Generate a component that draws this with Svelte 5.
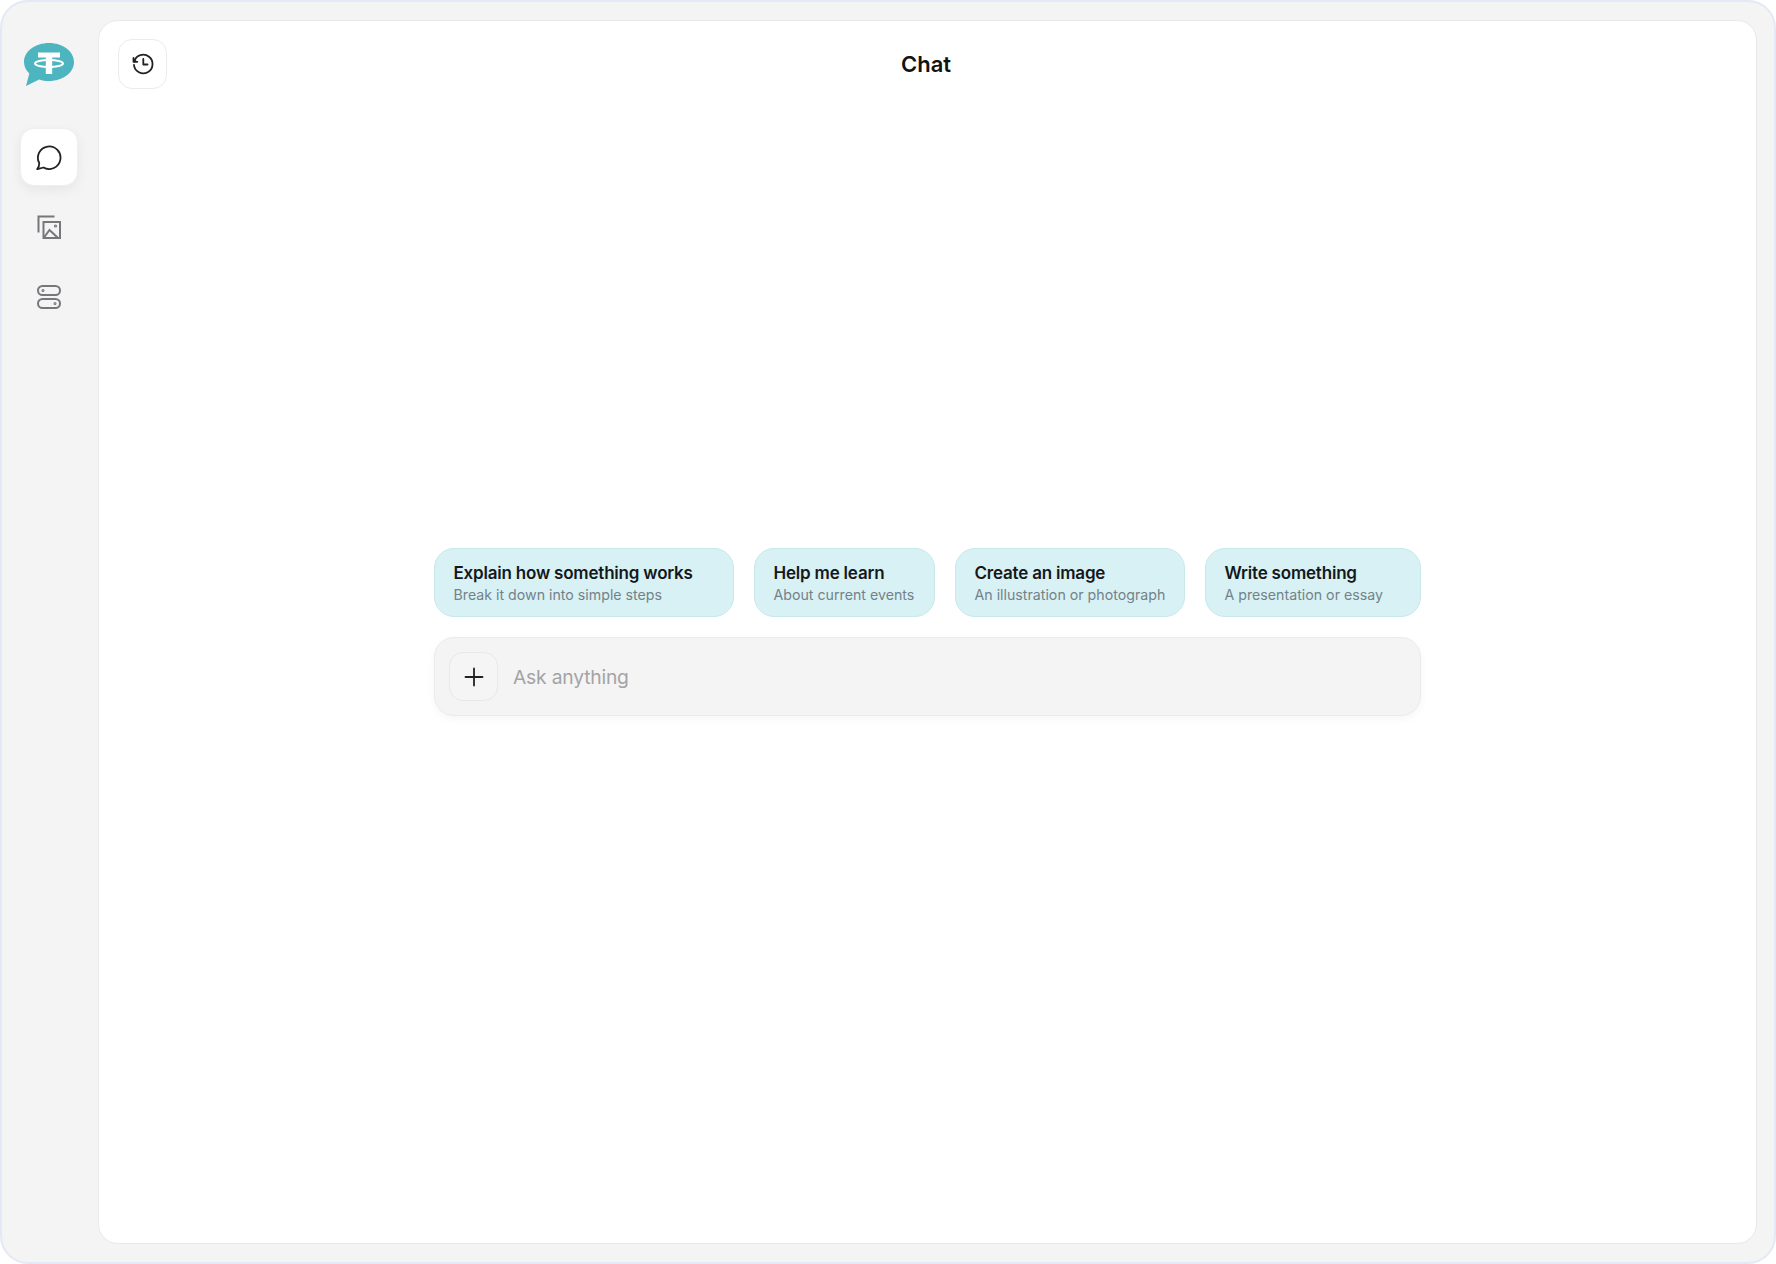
<script>
  const chips = [
    ['Explain how something works', 'Break it down into simple steps'],
    ['Help me learn', 'About current events'],
    ['Create an image', 'An illustration or photograph'],
    ['Write something', 'A presentation or essay']
  ];
</script>

<div class="shell">
  <aside class="rail">
    <div class="logo">
      <svg width="50" height="43" viewBox="0 0 50 43">
        <path d="M25 0C38.800 0 50 8.300 50 19C50 29.700 38.800 38 25 38C21.500 38 18.200 37.500 15.200 36.400L2 43L5.300 30.400C2 27.300 0 23.300 0 19C0 8.300 11.200 0 25 0Z" fill="#4DB5BF"/>
        <path d="M14 9.500H36V14.500H28.200V31H21.800V14.500H14Z" fill="#fff"/>
        <ellipse cx="25" cy="20.500" rx="14" ry="3.600" fill="none" stroke="#fff" stroke-width="2"/>
      </svg>
    </div>
    <button class="nav active" aria-label="Chat">
      <svg width="26" height="26" viewBox="1 -1 26 26" fill="none" stroke="#222" stroke-width="1.800" stroke-linejoin="round" stroke-linecap="round">
        <path d="M4.200 18A11.300 11.300 0 1 1 8.500 22.500L2.200 24.200Q4.500 21.500 4.200 18Z"/>
      </svg>
    </button>
    <button class="nav" aria-label="Images">
      <svg width="24" height="24" viewBox="0 0 24 24" fill="none" stroke="#77777B" stroke-width="2">
        <path d="M17.500 1.500H1.500V17.500"/>
        <rect x="6.500" y="7" width="16.500" height="16"/>
        <path d="M7 22.500L12.500 15L20.500 22.500"/>
        <circle cx="18.500" cy="11" r="0.600"/>
      </svg>
    </button>
    <button class="nav" aria-label="Tools">
      <svg width="24" height="24" viewBox="0 0 24 24" fill="none" stroke="#77777B" stroke-width="2">
        <rect x="1" y="1" width="22" height="9" rx="4.500"/>
        <rect x="1" y="14" width="22" height="9" rx="4.500"/>
        <circle cx="6" cy="5.500" r="0.500" fill="#77777B"/>
        <circle cx="18" cy="18.500" r="0.500" fill="#77777B"/>
      </svg>
    </button>
  </aside>

  <main class="panel">
    <header class="top">
      <button class="history" aria-label="History">
        <svg width="24" height="24" viewBox="0 0 24 24" fill="none" stroke="#222" stroke-width="1.800" stroke-linecap="round" stroke-linejoin="round">
          <path d="M3.300 9.500A9.300 9.300 0 1 1 3 13"/>
          <path d="M2.500 6V9.800H6.300" fill="#222"/>
          <path d="M12.300 7V12.500H16.500"/>
        </svg>
      </button>
      <h1>Chat</h1>
    </header>

    <section class="prompt">
      <div class="chips">
        {#each chips as [title, sub]}
          <button class="chip">
            <strong>{title}</strong>
            <span>{sub}</span>
          </button>
        {/each}
      </div>
      <div class="ask">
        <button class="plus" aria-label="Add">
          <svg width="20" height="20" viewBox="0 0 20 20" stroke="#222" stroke-width="1.800" stroke-linecap="round">
            <path d="M10 1.500V18.500M1.500 10H18.500"/>
          </svg>
        </button>
        <span class="placeholder">Ask anything</span>
      </div>
    </section>
  </main>
</div>

<style>
  :global(body) { background: #fff; }
  .shell {
    box-sizing: border-box;
    width: 1776px;
    height: 1264px;
    display: flex;
    padding: 18px 17px 18px 0;
    background: #F4F4F5;
    border: 2px solid #E5E8F6;
    border-radius: 28px;
    font-family: Inter, "Liberation Sans", sans-serif;
    color: #14181B;
  }
  button { padding: 0; font: inherit; color: inherit; cursor: pointer; }
  .rail {
    box-sizing: border-box;
    width: 96px;
    padding-right: 3px;
    flex: none;
    display: flex;
    flex-direction: column;
    align-items: center;
    gap: 12px;
  }
  .logo { height: 43px; margin: 23px 0 30px; }
  .logo svg { display: block; }
  .nav {
    width: 58px;
    height: 58px;
    display: flex;
    align-items: center;
    justify-content: center;
    border: 0;
    border-radius: 14px;
    background: none;
  }
  .nav svg { display: block; }
  .nav.active {
    background: #fff;
    box-shadow: 0 4px 12px rgba(20, 20, 30, 0.06);
    border: 1px solid #EFEFF1;
  }
  .panel {
    flex: 1;
    display: grid;
    grid-template-rows: 1fr auto 1fr;
    background: #fff;
    border: 1px solid #E9E9EB;
    border-radius: 20px;
  }
  .top {
    position: relative;
    display: flex;
    align-items: flex-start;
    justify-content: center;
    padding: 18px 3px 0 0;
  }
  .history {
    position: absolute;
    left: 19px;
    top: 18px;
    width: 49px;
    height: 50px;
    display: flex;
    align-items: center;
    justify-content: center;
    background: #fff;
    border: 1px solid #EBEBED;
    border-radius: 14px;
  }
  h1 {
    margin: 0;
    font-size: 22px;
    line-height: 50px;
    font-weight: 600;
    color: #121212;
  }
  .prompt {
    width: 987px;
    justify-self: center;
    display: flex;
    flex-direction: column;
    gap: 20px;
  }
  .chips {
    display: grid;
    grid-template-columns: 300px 181px 230px 216px;
    gap: 20px;
  }
  .chip {
    box-sizing: border-box;
    height: 69px;
    padding: 2px 18.5px 0;
    display: flex;
    flex-direction: column;
    align-items: flex-start;
    justify-content: center;
    gap: 1px;
    background: #D8F1F4;
    border: 1px solid #C8E8EA;
    border-radius: 20px;
  }
  .chip strong {
    font-size: 17px;
    line-height: 22px;
    letter-spacing: -0.2px;
    font-weight: 600;
    color: #14181B;
    white-space: nowrap;
  }
  .chip span { font-size: 14.2px; line-height: 20px; color: #73828A; white-space: nowrap; }
  .ask {
    box-sizing: border-box;
    height: 79px;
    padding: 0 14px;
    display: flex;
    align-items: center;
    gap: 15px;
    background: #F4F4F4;
    border: 1px solid #EBEBEC;
    border-radius: 20px;
    box-shadow: 0 3px 8px rgba(20, 20, 30, 0.04);
  }
  .plus {
    width: 49px;
    height: 49px;
    display: flex;
    align-items: center;
    justify-content: center;
    background: #F5F5F5;
    border: 1px solid #E8E8E9;
    border-radius: 14px;
  }
  .placeholder { font-size: 19.3px; letter-spacing: -0.2px; color: #A3A3A6; }
</style>
